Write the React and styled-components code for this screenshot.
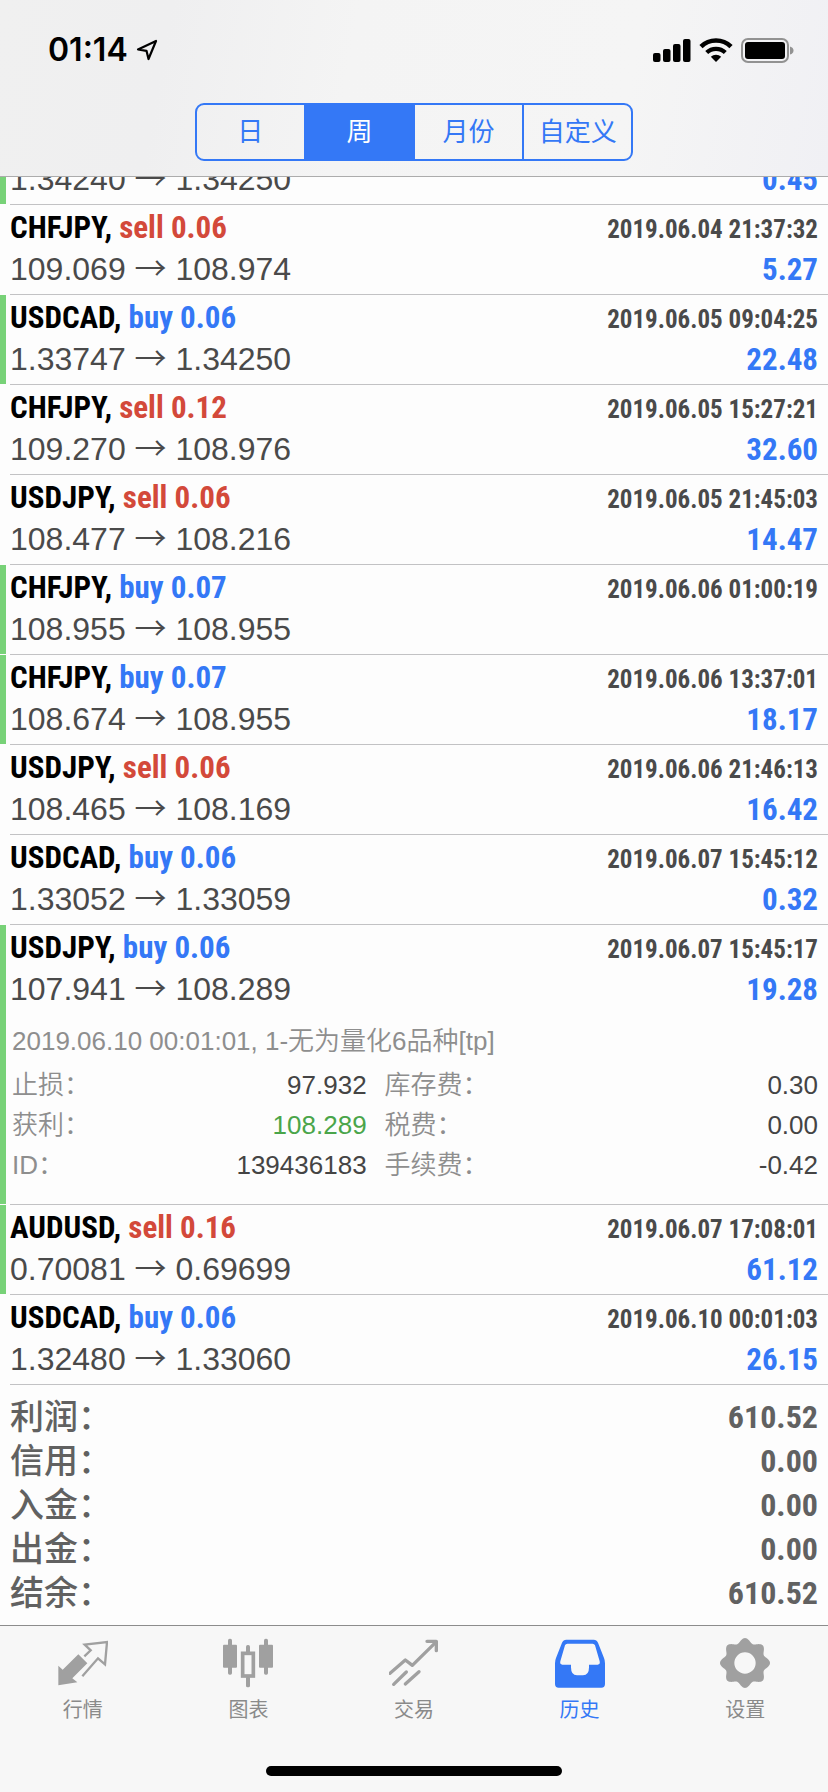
import React, { useState } from 'react';
import styled, { createGlobalStyle } from 'styled-components';

const colors = {
  blue: '#3478f6',
  red: '#d3493a',
  green: '#78d278',
  line: '#c2c2c4',
  text: '#4a4a4a',
  muted: '#8e8e8e',
  icon: '#a0a0a0',
};

const condensed = '"Roboto Condensed", "Noto Sans CJK SC", sans-serif';

const GlobalStyle = createGlobalStyle`
  * {
    box-sizing: border-box;
  }
  body {
    margin: 0;
    background-color: #fdfdfd;
    color: ${colors.text};
    font-family: "Liberation Sans", "Noto Sans CJK SC", sans-serif;
  }
  button {
    font: inherit;
  }
`;

const Screen = styled.div`
  display: flex;
  flex-direction: column;
  height: 100vh;
`;

const Header = styled.header`
  flex: none;
  padding-bottom: 15px;
  border-bottom: 1px solid #acacac;
  background: linear-gradient(100deg, #f0f0f0 0%, #efeff0 20%, #f4f4f4 42%, #f5f5f5 75%, #f0f0f4 100%);
`;

const StatusBar = styled.div`
  display: flex;
  align-items: center;
  padding: 30px 34px 33px 48px;
  line-height: 40px;
  color: #000;
`;

const Clock = styled.time`
  margin-right: 8px;
  font-family: Inter, sans-serif;
  font-size: 32px;
  font-weight: 600;
`;

const StatusIcons = styled.div`
  display: flex;
  align-items: center;
  gap: 8px;
  margin-left: auto;
`;

const Segments = styled.div`
  display: flex;
  width: 53%;
  margin: 0 auto;
  border: 2px solid ${colors.blue};
  border-radius: 9px;
  overflow: hidden;
`;

const Segment = styled.button`
  flex: 1;
  padding: 0;
  border: 0;
  border-left: 2px solid ${colors.blue};
  font-size: 26px;
  line-height: 54px;
  font-weight: 400;
  color: ${({ $active }) => ($active ? '#fff' : colors.blue)};
  background-color: ${({ $active }) => ($active ? colors.blue : 'transparent')};

  &:first-child {
    border-left: 0;
  }
`;

const History = styled.main`
  display: flex;
  flex: 1;
  flex-direction: column;
  justify-content: flex-end;
  min-height: 0;
  overflow: hidden;
`;

const Deals = styled.ul`
  margin: 0;
  padding: 0;
  list-style: none;
`;

const DealRow = styled.li`
  display: flex;
  gap: 4px;
`;

const Marker = styled.span`
  flex: none;
  width: 6px;
  margin-bottom: 1px;
  background-color: ${({ $on }) => ($on ? colors.green : 'transparent')};
`;

const DealBody = styled.div`
  flex: 1;
  padding: 2px 10px 3px 0;
  border-bottom: 1px solid ${colors.line};
`;

const Line = styled.div`
  display: flex;
  align-items: baseline;
  justify-content: space-between;
  height: 42px;
  font-size: 32px;
  line-height: 41px;
`;

const Symbol = styled.span`
  font-family: ${condensed};
  font-size: 31px;
  font-weight: 700;
  color: #000;
`;

const Side = styled.span`
  color: ${({ $side }) => ($side === 'buy' ? colors.blue : colors.red)};
`;

const DealTime = styled.time`
  font-family: ${condensed};
  font-size: 25px;
  font-weight: 700;
`;

const Arrow = styled.span`
  font-family: "Noto Sans CJK SC", sans-serif;
  font-weight: 350;
  line-height: 0;
`;

const Profit = styled.span`
  font-family: ${condensed};
  font-size: 31px;
  font-weight: 700;
  color: ${colors.blue};
`;

const Details = styled.div`
  margin-top: 10px;
  padding: 0 0 16px 2px;
  font-size: 26px;
  line-height: 40px;
  font-weight: 350;
`;

const Comment = styled.p`
  height: 40px;
  margin: 0 0 4px;
  color: ${colors.muted};
`;

const Fields = styled.dl`
  display: grid;
  grid-template-columns: 9fr 11fr;
  column-gap: 18px;
  margin: 0;
`;

const Field = styled.div`
  display: flex;
  justify-content: space-between;
  height: 40px;
`;

const FieldName = styled.dt`
  color: ${colors.muted};
`;

const FieldValue = styled.dd`
  margin: 0;
  color: ${({ $hit }) => ($hit ? '#4aa54a' : '#444')};
`;

const Summary = styled.dl`
  margin: 0;
  padding: 10px;
  color: #616161;
`;

const SummaryRow = styled.div`
  display: flex;
  justify-content: space-between;
  height: 44px;
  line-height: 44px;
`;

const SummaryName = styled.dt`
  font-size: 34px;
  font-weight: 500;
`;

const SummaryValue = styled.dd`
  margin: 0;
  font-family: ${condensed};
  font-size: 32px;
  font-weight: 700;
`;

const Footer = styled.footer`
  flex: none;
  padding-bottom: 16px;
  border-top: 1px solid #8c8c8c;
  background-color: #f7f7f7;
`;

const TabBar = styled.nav`
  display: flex;
  padding-top: 12px;
`;

const Tab = styled.button`
  display: flex;
  flex: 1;
  flex-direction: column;
  align-items: center;
  gap: 8px;
  padding: 0;
  border: 0;
  background: none;
  color: ${({ $active }) => ($active ? colors.blue : colors.icon)};
`;

const TabLabel = styled.span`
  font-size: 20px;
  line-height: 28px;
  color: ${({ $active }) => ($active ? colors.blue : '#8a8a8a')};
`;

const HomeIndicator = styled.div`
  width: 296px;
  height: 10px;
  margin: 42px auto 0;
  border-radius: 5px;
  background-color: #000;
`;

const TabIcon = ({ children }) => (
  <svg width="50" height="50" viewBox="0 0 150 150" fill="none" aria-hidden="true">
    {children}
  </svg>
);

const QuotesIcon = () => (
  <TabIcon>
    <path d="M1 83 14 95 61 49 88 76 43 121 58 133 1 142Z" fill="currentColor" />
    <path
      d="M79 55 98 37 80 20 147 12 141 79 120 61 73 115"
      stroke="currentColor"
      strokeWidth="7"
    />
  </TabIcon>
);

const ChartIcon = () => (
  <TabIcon>
    <g fill="currentColor">
      <rect x="0" y="20" width="42" height="69" rx="3" />
      <rect x="15" y="2" width="12" height="108" rx="5" />
      <rect x="108" y="20" width="42" height="69" rx="3" />
      <rect x="123" y="2" width="12" height="108" rx="5" />
      <rect x="69" y="21" width="12" height="24" rx="5" />
      <rect x="69" y="115" width="12" height="33" rx="5" />
    </g>
    <rect x="59" y="46" width="32" height="68" stroke="currentColor" strokeWidth="11" />
  </TabIcon>
);

const TradeIcon = () => (
  <TabIcon>
    <g stroke="currentColor" strokeWidth="10" strokeLinecap="round" strokeLinejoin="round">
      <path d="M3 106 49 66 70 82 140 13" />
      <path d="M114 10H142V38" />
      <path d="M14 139 52 102M49 138 90 101" />
    </g>
  </TabIcon>
);

const HistoryIcon = () => (
  <TabIcon>
    <path
      fill="currentColor"
      fillRule="evenodd"
      d="M34 5H116Q125 5 129 14L147 60Q150 67 150 76V138Q150 149 139 149H11Q0 149 0 138V76Q0 67 3 60L21 14Q25 5 34 5ZM37 17Q32 17 30 22L16 70Q14 80 22 80H48V88Q48 112 66 112H84Q102 112 102 88V80H128Q136 80 134 70L120 22Q118 17 113 17Z"
    />
  </TabIcon>
);

// eight soft teeth, traced around the rim
const gearRim = Array.from({ length: 160 }, (_, i) => {
  const angle = (i / 160) * Math.PI * 2;
  const radius = 68 + 7 * Math.cos(angle * 8);
  return `${(75 + radius * Math.sin(angle)).toFixed(1)} ${(75 - radius * Math.cos(angle)).toFixed(1)}`;
}).join('L');

const SettingsIcon = () => (
  <TabIcon>
    <path
      fill="currentColor"
      fillRule="evenodd"
      d={`M${gearRim}ZM75 43a32 32 0 1 0 0 64a32 32 0 1 0 0-64Z`}
    />
  </TabIcon>
);

const LocationIcon = () => (
  <svg width="22" height="22" viewBox="0 0 22 22" fill="none" aria-hidden="true">
    <path
      d="M2 10.5 20 2 12.5 20 10.5 11.8Z"
      stroke="currentColor"
      strokeWidth="2.2"
      strokeLinejoin="round"
    />
  </svg>
);

const SignalIcon = () => (
  <svg width="38" height="24" viewBox="0 0 38 24" fill="currentColor" aria-hidden="true">
    <rect x="0" y="15" width="7.5" height="9" rx="2" />
    <rect x="10" y="11" width="7.5" height="13" rx="2" />
    <rect x="20" y="6" width="7.5" height="18" rx="2" />
    <rect x="30" y="1" width="7.5" height="23" rx="2" />
  </svg>
);

const WifiIcon = () => (
  <svg width="34" height="24" viewBox="0 0 34 24" fill="none" aria-hidden="true">
    <path d="M2 8.6A21.5 21.5 0 0 1 32 8.6" stroke="currentColor" strokeWidth="4.6" />
    <path d="M7.7 14.6A13.4 13.4 0 0 1 26.3 14.6" stroke="currentColor" strokeWidth="4.2" />
    <path d="M17 24 11.8 18.8A7.4 7.4 0 0 1 22.2 18.8Z" fill="currentColor" />
  </svg>
);

const BatteryIcon = () => (
  <svg width="53" height="25" viewBox="0 0 53 25" aria-hidden="true">
    <rect x="1" y="1" width="46" height="23" rx="6" fill="none" stroke="#929292" strokeWidth="2" />
    <rect x="4" y="4" width="40" height="17" rx="3" fill="currentColor" />
    <path d="M49 8.5Q52.5 9.5 52.5 12.5T49 16.5Z" fill="#929292" />
  </svg>
);

const periods = ['日', '周', '月份', '自定义'];

const deals = [
  { open: '1.34240', close: '1.34250', profit: '0.45', marked: true },
  { symbol: 'CHFJPY', side: 'sell', volume: '0.06', time: '2019.06.04 21:37:32', open: '109.069', close: '108.974', profit: '5.27' },
  { symbol: 'USDCAD', side: 'buy', volume: '0.06', time: '2019.06.05 09:04:25', open: '1.33747', close: '1.34250', profit: '22.48', marked: true },
  { symbol: 'CHFJPY', side: 'sell', volume: '0.12', time: '2019.06.05 15:27:21', open: '109.270', close: '108.976', profit: '32.60' },
  { symbol: 'USDJPY', side: 'sell', volume: '0.06', time: '2019.06.05 21:45:03', open: '108.477', close: '108.216', profit: '14.47' },
  { symbol: 'CHFJPY', side: 'buy', volume: '0.07', time: '2019.06.06 01:00:19', open: '108.955', close: '108.955', marked: true },
  { symbol: 'CHFJPY', side: 'buy', volume: '0.07', time: '2019.06.06 13:37:01', open: '108.674', close: '108.955', profit: '18.17', marked: true },
  { symbol: 'USDJPY', side: 'sell', volume: '0.06', time: '2019.06.06 21:46:13', open: '108.465', close: '108.169', profit: '16.42' },
  { symbol: 'USDCAD', side: 'buy', volume: '0.06', time: '2019.06.07 15:45:12', open: '1.33052', close: '1.33059', profit: '0.32' },
  {
    symbol: 'USDJPY',
    side: 'buy',
    volume: '0.06',
    time: '2019.06.07 15:45:17',
    open: '107.941',
    close: '108.289',
    profit: '19.28',
    marked: true,
    comment: '2019.06.10 00:01:01, 1-无为量化6品种[tp]',
    fields: [
      { name: '止损：', value: '97.932' },
      { name: '库存费：', value: '0.30' },
      { name: '获利：', value: '108.289', hit: true },
      { name: '税费：', value: '0.00' },
      { name: 'ID：', value: '139436183' },
      { name: '手续费：', value: '-0.42' },
    ],
  },
  { symbol: 'AUDUSD', side: 'sell', volume: '0.16', time: '2019.06.07 17:08:01', open: '0.70081', close: '0.69699', profit: '61.12', marked: true },
  { symbol: 'USDCAD', side: 'buy', volume: '0.06', time: '2019.06.10 00:01:03', open: '1.32480', close: '1.33060', profit: '26.15' },
];

const totals = [
  { name: '利润：', value: '610.52' },
  { name: '信用：', value: '0.00' },
  { name: '入金：', value: '0.00' },
  { name: '出金：', value: '0.00' },
  { name: '结余：', value: '610.52' },
];

const tabs = [
  { label: '行情', Icon: QuotesIcon },
  { label: '图表', Icon: ChartIcon },
  { label: '交易', Icon: TradeIcon },
  { label: '历史', Icon: HistoryIcon },
  { label: '设置', Icon: SettingsIcon },
];

const Deal = ({ deal }) => (
  <DealRow>
    <Marker $on={deal.marked} />
    <DealBody>
      {deal.symbol && (
        <Line>
          <Symbol>
            {deal.symbol},{' '}
            <Side $side={deal.side}>
              {deal.side} {deal.volume}
            </Side>
          </Symbol>
          <DealTime>{deal.time}</DealTime>
        </Line>
      )}
      <Line>
        <span>
          {deal.open} <Arrow>→</Arrow> {deal.close}
        </span>
        {deal.profit && <Profit>{deal.profit}</Profit>}
      </Line>
      {deal.fields && (
        <Details>
          <Comment>{deal.comment}</Comment>
          <Fields>
            {deal.fields.map(({ name, value, hit }) => (
              <Field key={name}>
                <FieldName>{name}</FieldName>
                <FieldValue $hit={hit}>{value}</FieldValue>
              </Field>
            ))}
          </Fields>
        </Details>
      )}
    </DealBody>
  </DealRow>
);

const App = () => {
  const [period, setPeriod] = useState('周');
  const [tab, setTab] = useState('历史');

  return (
    <Screen lang="zh-CN">
      <GlobalStyle />
      <Header>
        <StatusBar>
          <Clock>01:14</Clock>
          <LocationIcon />
          <StatusIcons>
            <SignalIcon />
            <WifiIcon />
            <BatteryIcon />
          </StatusIcons>
        </StatusBar>
        <Segments>
          {periods.map((name) => (
            <Segment
              key={name}
              type="button"
              $active={name === period}
              aria-pressed={name === period}
              onClick={() => setPeriod(name)}
            >
              {name}
            </Segment>
          ))}
        </Segments>
      </Header>
      <History>
        <Deals>
          {deals.map((deal, i) => (
            <Deal key={i} deal={deal} />
          ))}
        </Deals>
        <Summary>
          {totals.map(({ name, value }) => (
            <SummaryRow key={name}>
              <SummaryName>{name}</SummaryName>
              <SummaryValue>{value}</SummaryValue>
            </SummaryRow>
          ))}
        </Summary>
      </History>
      <Footer>
        <TabBar>
          {tabs.map(({ label, Icon }) => (
            <Tab
              key={label}
              type="button"
              $active={label === tab}
              onClick={() => setTab(label)}
            >
              <Icon />
              <TabLabel $active={label === tab}>{label}</TabLabel>
            </Tab>
          ))}
        </TabBar>
        <HomeIndicator />
      </Footer>
    </Screen>
  );
};

export default App;
